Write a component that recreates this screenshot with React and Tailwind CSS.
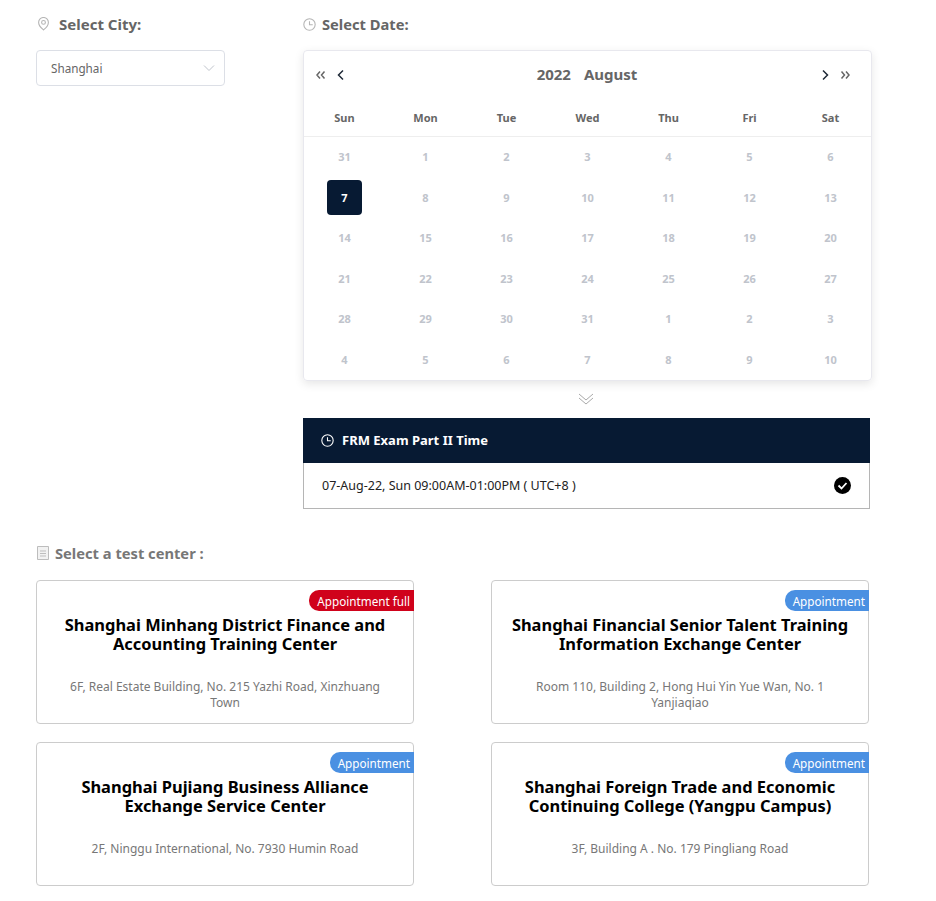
const Pin = () => (
  <svg width="13" height="14" viewBox="0 0 24 24" fill="none" stroke="#b5b5b5" strokeWidth="2">
    <path d="M12 23s9-7.500 9-14a9 9 0 1 0-18 0c0 6.500 9 14 9 14z" />
    <circle cx="12" cy="9" r="3.500" />
  </svg>
);

const Clock = ({ color = "#b5b5b5" }) => (
  <svg width="13" height="13" viewBox="0 0 24 24" fill="none" stroke={color} strokeWidth="2">
    <circle cx="12" cy="12" r="10.500" />
    <path d="M12 6v6.500h6" />
  </svg>
);

const Doc = () => (
  <svg width="12" height="14" viewBox="0 0 12 14" fill="#f2f2f2" stroke="#bdbdbd">
    <path d="M.5.5h11v13H.5z" />
    <path d="M3 5h6M3 7.500h6M3 10h6" />
  </svg>
);

const Chevron = ({ d, color = "#666" }) => (
  <svg width="12" height="12" viewBox="0 0 12 12" fill="none" stroke={color} strokeWidth="1.500">
    <path d={d} />
  </svg>
);

const days = ["Sun", "Mon", "Tue", "Wed", "Thu", "Fri", "Sat"];
const dates = [31, 1, 2, 3, 4, 5, 6, 7, 8, 9, 10, 11, 12, 13, 14, 15, 16, 17, 18, 19, 20, 21, 22, 23, 24, 25, 26, 27, 28, 29, 30, 31, 1, 2, 3, 4, 5, 6, 7, 8, 9, 10];

const centers = [
  { name: "Shanghai Minhang District Finance and Accounting Training Center", addr: "6F, Real Estate Building, No. 215 Yazhi Road, Xinzhuang Town", full: true },
  { name: "Shanghai Financial Senior Talent Training Information Exchange Center", addr: "Room 110, Building 2, Hong Hui Yin Yue Wan, No. 1 Yanjiaqiao" },
  { name: "Shanghai Pujiang Business Alliance Exchange Service Center", addr: "2F, Ninggu International, No. 7930 Humin Road" },
  { name: "Shanghai Foreign Trade and Economic Continuing College (Yangpu Campus)", addr: "3F, Building A . No. 179 Pingliang Road" },
];

const CenterCard = ({ name, addr, full }) => (
  <div className="relative h-[144px] border border-[#ccc] rounded px-[16px] pt-[34px] text-center">
    <span className={`absolute right-[-1px] top-[9px] h-[21px] leading-[22px] pl-[8px] pr-[4px] text-[11.700px] text-white rounded-l-[10px] ${full ? "bg-[#d0021b]" : "bg-[#4a90e2]"}`}>
      {full ? "Appointment full" : "Appointment"}
    </span>
    <div className="text-[16.450px] leading-[19px] font-bold text-black h-[38px]">{name}</div>
    <div className="mt-[26px] px-[8px] text-[12px] leading-[16px] text-[#777]">{addr}</div>
  </div>
);

export default function App() {
  return (
    <div className="w-[936px] h-[901px] pt-[15px] pl-[36px] bg-white font-['Noto_Sans',sans-serif]">
      <div className="flex">
        <div className="w-[267px]">
          <div className="flex items-center gap-[9px] h-[18px] pl-[1px] text-[15px] font-bold text-[#666]">
            <Pin /> Select City:
          </div>
          <div className="mt-[17px] w-[189px] h-[36px] border border-[#dcdfe6] rounded flex items-center justify-between pl-[14px] pr-[9px] text-[11.700px] text-[#666]">
            <span className="pt-[1px]">Shanghai</span>
            <svg width="12" height="12" viewBox="0 0 12 12" fill="none" stroke="#c0c4cc"><path d="M1 3.500l5 5 5-5" /></svg>
          </div>
        </div>
        <div className="w-[569px]">
          <div className="flex items-center gap-[6px] h-[18px] text-[14.700px] font-bold text-[#666]">
            <Clock /> Select Date:
          </div>
          <div className="mt-[17px] h-[331px] border border-[#e8e8ee] rounded shadow-[0_3px_10px_rgba(0,0,0,0.1)]">
            <div className="h-[49px] pb-[2px] flex items-center justify-between pl-[11px] pr-[20px]">
              <div className="flex items-center gap-[8px]">
                <Chevron d="M5 2.500L2 6l3 3.500M9.500 2.500L6.500 6l3 3.500" />
                <Chevron d="M8 1.500L3.500 6 8 10.500" color="#1f2937" />
              </div>
              <div className="ml-[8px] pb-[1px] flex gap-[13px] text-[15px] font-bold text-[#666]">
                <span>2022</span>
                <span>August</span>
              </div>
              <div className="flex items-center gap-[8px]">
                <Chevron d="M4 1.500L8.500 6 4 10.500" color="#1f2937" />
                <Chevron d="M2.500 2.500L5.500 6l-3 3.500M7 2.500L10 6l-3 3.500" />
              </div>
            </div>
            <div className="grid grid-cols-7 h-[37px] border-b border-[#eee] items-center text-center text-[11px] font-bold text-[#666]">
              {days.map((d) => <div key={d}>{d}</div>)}
            </div>
            <div className="grid grid-cols-7 text-center text-[11px] font-bold text-[#c0c4cc]">
              {dates.map((d, i) => (
                <div key={i} className="h-[40.500px] flex items-center justify-center">
                  {i === 7 ? <span className="w-[35px] h-[35px] rounded bg-[#071a33] text-white flex items-center justify-center">{d}</span> : d}
                </div>
              ))}
            </div>
          </div>
          <div className="h-[37px] pr-[3px] pb-[2px] flex items-center justify-center">
            <svg width="16" height="14" viewBox="0 0 16 14" fill="none" stroke="#aaa"><path d="M1 2l7 6 7-6M1 6l7 6 7-6" /></svg>
          </div>
          <div className="w-[567px] h-[45px] bg-[#071a33] flex items-center gap-[8px] px-[18px] text-[13px] font-bold text-white">
            <Clock color="#fff" /> FRM Exam Part II Time
          </div>
          <div className="w-[567px] h-[46px] border border-t-0 border-[#b5b5b5] flex items-center justify-between px-[18px] text-[12.500px] text-[#222]">
            <span className="pt-[2px]">07-Aug-22, Sun 09:00AM-01:00PM ( UTC+8 )</span>
            <svg width="17" height="17" viewBox="0 0 17 17"><circle cx="8.500" cy="8.500" r="8.500" fill="#000" /><path d="M4.500 8.500l3 3 5-5.500" fill="none" stroke="#fff" strokeWidth="1.800" /></svg>
          </div>
        </div>
      </div>
      <div className="mt-[35px] flex items-center gap-[6px] h-[18px] pl-[1px] text-[14.700px] font-bold text-[#777]">
        <Doc /> Select a test center :
      </div>
      <div className="mt-[18px] w-[833px] grid grid-cols-[378px_378px] gap-x-[77px] gap-y-[18px]">
        {centers.map((c) => <CenterCard key={c.name} {...c} />)}
      </div>
    </div>
  );
}
